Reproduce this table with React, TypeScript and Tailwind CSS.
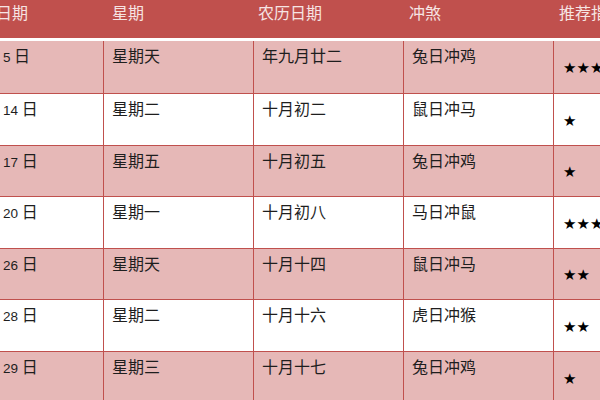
const rows = [
  { d: '5', w: '星期天', l: '年九月廿二', c: '兔日冲鸡', s: '★★★', pink: true, h: 'h-[53px]' },
  { d: '14', w: '星期二', l: '十月初二', c: '鼠日冲马', s: '★', pink: false, h: 'h-[51.6px]' },
  { d: '17', w: '星期五', l: '十月初五', c: '兔日冲鸡', s: '★', pink: true, h: 'h-[51.6px]' },
  { d: '20', w: '星期一', l: '十月初八', c: '马日冲鼠', s: '★★★', pink: false, h: 'h-[51.6px]' },
  { d: '26', w: '星期天', l: '十月十四', c: '鼠日冲马', s: '★★', pink: true, h: 'h-[51.6px]' },
  { d: '28', w: '星期二', l: '十月十六', c: '虎日冲猴', s: '★★', pink: false, h: 'h-[51.6px]' },
  { d: '29', w: '星期三', l: '十月十七', c: '兔日冲鸡', s: '★', pink: true, h: 'h-[51.6px]' },
];

const cell = 'shrink-0 border-r border-[#c0504d] pt-[5px] leading-[18px]';

export default function App() {
  return (
    <div
      className="w-[600px] h-[400px] overflow-hidden bg-white text-[16px] text-[#1e1e1e]"
      style={{ fontFamily: '"Noto Sans CJK SC", "Liberation Sans", sans-serif' }}
    >
      {/* header */}
      <div className="flex h-[38px] bg-[#c0504d] text-[#f6e4e3] pt-[3px] leading-[18px] whitespace-nowrap">
        <div className="w-[104px] shrink-0 pl-0 -ml-[4px]">日期</div>
        <div className="w-[150px] shrink-0 pl-[12px]">星期</div>
        <div className="w-[150px] shrink-0 pl-[8px]">农历日期</div>
        <div className="w-[150px] shrink-0 pl-[9px]">冲煞</div>
        <div className="shrink-0 pl-[9px]">推荐指数</div>
      </div>
      <div className="h-[3px] bg-white" />

      {rows.map((r, i) => (
        <div
          key={i}
          className={`flex ${r.h} border-b border-[#c0504d] whitespace-nowrap ${r.pink ? 'bg-[#e6b8b7]' : 'bg-white'}`}
        >
          <div className={`${cell} w-[104px] pl-[3px]`}>
            <span className="text-[13.5px]" style={{ fontFamily: '"Liberation Sans", sans-serif' }}>
              {r.d}
            </span>{' '}
            日
          </div>
          <div className={`${cell} w-[150px] pl-[8px]`}>{r.w}</div>
          <div className={`${cell} w-[150px] pl-[8px]`}>{r.l}</div>
          <div className={`${cell} w-[150px] pl-[8px]`}>{r.c}</div>
          <div
            className="shrink-0 flex items-center pl-[9px] pt-[3px] text-[15px] text-black"
            style={{ fontFamily: '"DejaVu Sans", sans-serif' }}
          >
            {r.s}
          </div>
        </div>
      ))}
    </div>
  );
}
